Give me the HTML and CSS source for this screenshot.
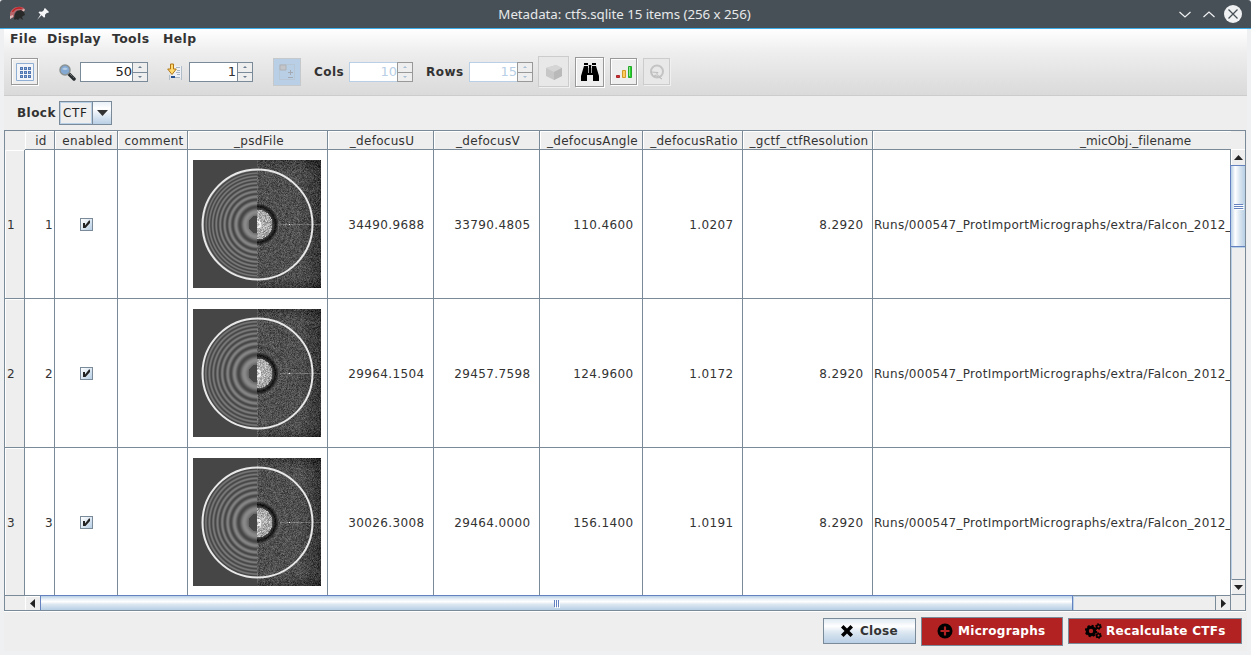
FILE: index.html
```html
<!DOCTYPE html>
<html lang="en">
<head>
<meta charset="utf-8">
<title>Metadata: ctfs.sqlite 15 items (256 x 256)</title>
<link rel="stylesheet" href="styles.css">
</head>
<body>
<header class="titlebar">
  <svg class="app-icon" width="18" height="18" viewBox="0 0 18 18"><path d="M1 14V9C2 3 9 0 15 3l1 2-3 2C9 4 5 6 5 12l-2 1z" fill="#b96468"/><path d="M3 7C4 3 10 1 14 3l-2 1C9 3 6 4 4 7z" fill="#c11f24"/><path d="M1 11l3-1v2l-3 2zM13 5l2-1 1 1-2 2z" fill="#d9b9ba"/><path d="M5 14l1-5 2-3 4-1 3 2 1 3-2 1-1 1 1 3-3-2-2 2-2-1-1 1z" fill="#292929"/></svg>
  <svg class="pin" width="12" height="12" viewBox="0 0 12 12"><path d="M7 1l1-1 4 4-1 1-1-.2-2 2 .1 2-1 1-2.600-2.600L0 12l3.500-5.500L1.500 4.500l1-1 2.500.2 2-1.700z" fill="#f5f6f7"/></svg>
  <h1 class="window-title">Metadata: ctfs.sqlite 15 items (256 x 256)</h1>
  <svg class="window-buttons" width="66" height="20" viewBox="0 0 66 20"><path d="M2.500 8l5.500 5 5.500-5M26.500 13l5.500-5 5.500 5" fill="none" stroke="#eff0f1" stroke-width="1.200"/><circle cx="56" cy="10" r="9" fill="#f0f1f2"/><path d="M51.500 5.500l9 9m0-9l-9 9" stroke="#475057" stroke-width="1.300"/></svg>
</header>
<main class="client">
  <section class="top">
    <nav class="menu"><span class="m-file">File</span><span class="m-display">Display</span><span class="m-tools">Tools</span><span class="m-help">Help</span></nav>
    <div class="toolbar">
      <button class="tool grid-tool"><svg width="18" height="18" viewBox="0 0 18 18"><path d="M.5.500h17v17H.5z" fill="#f2f4f7" stroke="#8faed4"/><path d="M4 4h3v3H4zm4 0h3v3H8zm4 0h3v3h-3zM4 8h3v3H4zm4 0h3v3H8zm4 0h3v3h-3zm-8 4h3v3H4zm4 0h3v3H8zm4 0h3v3h-3z" fill="#5077b2"/><path d="M5 5h1v1H5zm4 0h1v1H9zm4 0h1v1h-1zM5 9h1v1H5zm4 0h1v1H9zm4 0h1v1h-1zm-8 4h1v1H5zm4 0h1v1H9zm4 0h1v1h-1z" fill="#8fadd8"/></svg></button>
      <svg class="lens" width="17" height="17" viewBox="0 0 17 17"><path d="M10 10l5 5" stroke="#292e31" stroke-width="3.500" stroke-linecap="round"/><path d="M11 10l4 4" stroke="#9b9b9b" stroke-width="1" stroke-dasharray="1 1"/><circle cx="6" cy="6" r="5" fill="#83a9d3" stroke="#8c9292" stroke-width="1.500"/><path d="M3 5q3-3 6 0-3 2-6 0" fill="#b8cee4"/></svg>
      <div class="spinner zoom"><span>50</span><div class="steps"><i class="up"></i><i class="down"></i></div></div>
      <svg class="goto" width="16" height="18" viewBox="0 0 16 18"><path d="M2.500 12v5M14.500 3v14" stroke="#b1bdc9"/><path d="M4 3h10v12H4z" fill="#edf1f5"/><path d="M9 4.500h4M10 7.500h3M9 9.500h4M10 11.500h3M8 14.500h5" stroke="#a7b5c5"/><path d="M4 13h4v2H4z" fill="#244f91"/><path d="M3.500 1h3v5H9.300L5 11.500.7 6h2.800z" fill="#ffdb72" stroke="#b27517"/></svg>
      <div class="spinner page"><span>1</span><div class="steps"><i class="up"></i><i class="down"></i></div></div>
      <button class="tool adjust"><svg width="18" height="18" viewBox="0 0 18 18"><path d="M1.500 1.500h15v15h-15z" fill="none" stroke="#b9bec5" stroke-dasharray="1 1"/><path d="M2 2h6v5H2z" fill="#c4c5c8" stroke="#aeb2b8"/><path d="M10 9.500h5M12.500 7v5M10 14.500h5" stroke="#a4a9b2"/></svg></button>
      <label class="cols-label">Cols</label>
      <div class="spinner off"><span>10</span><div class="steps"><i class="up"></i><i class="down"></i></div></div>
      <label class="rows-label">Rows</label>
      <div class="spinner off"><span>15</span><div class="steps"><i class="up"></i><i class="down"></i></div></div>
      <button class="tool cube disabled"><svg width="18" height="18" viewBox="0 0 18 18"><path d="M1 5l10-3 6 3v8l-8 4-8-4z" fill="#c7c7c7"/><path d="M1 5l10-3 6 3-8 4z" fill="#d5d5d5"/><path d="M9 9l8-4v8l-8 4z" fill="#b9b9b9"/></svg></button>
      <button class="tool find"><svg width="18" height="18" viewBox="0 0 18 18"><path d="M3 0h4v2H3zm8 0h4v2h-4zM3 3h4v2h4V3h4l3 10v5h-6v-6H6v6H0v-5z" fill="#000"/><path d="M7.700 2h2.600v8H7.700z"/><path d="M7.500 3v7M10.500 3v7" stroke="#eee" stroke-width=".7"/></svg></button>
      <button class="tool chart"><svg width="18" height="16" viewBox="0 0 18 16"><path d="M1.500 11.500h3v2h-3z" fill="#d63232" stroke="#a8262b"/><path d="M7.500 6.500h3v7h-3z" fill="#ffce60" stroke="#d39a25"/><path d="M13.500 2.500h3v11h-3z" fill="#29d32e" stroke="#26a92b"/><path d="M14.500 3v9" stroke="#8ee891"/></svg></button>
      <button class="tool redo disabled"><svg width="16" height="16" viewBox="0 0 16 16"><circle cx="8" cy="7.500" r="6" fill="none" stroke="#c4c4c4" stroke-width="2"/><path d="M2 8l7 .5-1.500 1.500 5.500 5-7-4-1 2z" fill="#e5e5e5" stroke="#bdbdbd"/></svg></button>
    </div>
  </section>
  <div class="block-row"><label class="block-label">Block</label><div class="combo"><span>CTF</span><div class="combo-arrow"><svg width="11" height="6"><path d="M0 0h11L5.500 6z" fill="#333"/></svg></div></div></div>
  <section class="table-pane">
    <div class="table-main">
      <div class="row head" id="head"></div>
      <div class="body" id="body"></div>
      <div class="hscroll"><div class="corner"></div><div class="arrow"><svg width="5" height="9"><path d="M5 0v9L0 4.500z" fill="#222"/></svg></div><div class="hthumb"><i></i><i></i><i></i></div><div class="htrack"></div><div class="arrow right"><svg width="5" height="9"><path d="M0 0v9l5-4.500z" fill="#222"/></svg></div></div>
    </div>
    <div class="vscroll"><div class="vhead"></div><div class="varrow"><svg width="9" height="5"><path d="M0 5h9L4.500 0z" fill="#222"/></svg></div><div class="vthumb"><i></i><i></i><i></i></div><div class="vtrack"></div><div class="varrow bottom"><svg width="9" height="5"><path d="M0 0h9L4.500 5z" fill="#222"/></svg></div><div class="vcorner"></div></div>
  </section>
  <footer class="actions">
    <button class="action close"><svg width="12" height="12" viewBox="0 0 12 12"><path d="M2.500 0L6 3.500 9.500 0 12 2.500 8.500 6 12 9.500 9.500 12 6 8.500 2.500 12 0 9.500 3.500 6 0 2.500z"/></svg><span class="t-close">Close</span></button>
    <button class="action danger micro"><svg width="16" height="16" viewBox="0 0 16 16"><circle cx="8" cy="8" r="7.500"/><path d="M8 3.500v9M3.500 8h9" stroke="#b22222" stroke-width="2.200"/></svg><span class="t-micro">Micrographs</span></button>
    <button class="action danger recalc"><svg width="17" height="16" viewBox="0 0 17 16"><circle cx="6" cy="8" r="3.700" fill="none" stroke="#000" stroke-width="3"/><circle cx="6" cy="8" r="5.400" fill="none" stroke="#000" stroke-width="1.600" stroke-dasharray="2.200 2.040"/><g fill="none" stroke="#000"><circle cx="13.500" cy="3.500" r="1.800" stroke-width="1.600"/><circle cx="13.500" cy="3.500" r="2.900" stroke-dasharray="1.500 1.500"/><circle cx="13.500" cy="12.500" r="1.800" stroke-width="1.600"/><circle cx="13.500" cy="12.500" r="2.900" stroke-dasharray="1.500 1.500"/></g></svg><span class="t-recalc">Recalculate CTFs</span></button>
  </footer>
</main>
<script src="app.js"></script>
</body>
</html>
```
FILE: styles.css
```css
* { box-sizing: border-box; }
body { margin: 0; width: 1251px; height: 655px; overflow: hidden; background: #eff0f1; font: 12px/14px "DejaVu Sans", sans-serif; color: #333; }
button { font: inherit; color: inherit; margin: 0; padding: 0; }
svg { display: block; flex: none; }
span, label { white-space: nowrap; }
.titlebar { height: 29px; display: flex; align-items: center; background: #475057; border-bottom: 1px solid #3daee9; border-radius: 3px 3px 0 0; padding: 0 8px 0 9px; }
.pin { margin-left: 10px; }
.window-title { flex: 1; margin: 0 0 0 23px; text-align: center; font: 13.33px/20px "Noto Sans", sans-serif; color: #e6e8e9; letter-spacing: -0.05px; }
.client { margin: 0 4px; height: 622px; background: #eee; }
.top { height: 67px; background: linear-gradient(#fff, #eee 35%, #dadada); border-bottom: 1px solid #ccc; }
.menu { display: flex; height: 20px; padding: 3px 0 0 6px; font-weight: bold; letter-spacing: .4px; }
.menu span { flex: none; font-size: 12.4px; }
.m-file { width: 37px; } .m-display { width: 65px; } .m-tools { width: 51px; }
.toolbar { display: flex; align-items: center; height: 45px; padding: 0 0 0 7px; }
.toolbar > * { flex: none; }
.toolbar label, .block-row label { font-weight: bold; letter-spacing: .45px; }
.tool { width: 27px; height: 27px; display: flex; align-items: center; justify-content: center; border: 1px solid #999; background: #eee; box-shadow: 1px 1px #fff, inset 1px 1px #fff; }
.lens { margin: 1px 0 0 21px; }
.goto { margin: 0 0 0 19px; }
.spinner { display: flex; width: 64px; height: 20px; border: 1px solid #7a8a99; background: #fff; }
.spinner > span { flex: 1; text-align: right; font-size: 13px; line-height: 18px; padding-right: 1px; }
.spinner.zoom { width: 68px; margin-left: 4px; }
.spinner.zoom > span { color: #222; padding-right: 0; }
.spinner.page { margin-left: 6px; }
.steps { width: 15px; border-left: 1px solid #7a8a99; background: #eee; display: flex; flex-direction: column; }
.steps i { height: 9px; display: flex; align-items: center; justify-content: center; }
.steps i + i { border-top: 1px solid #7a8a99; }
.steps i::after { content: ""; border: 2px solid transparent; border-bottom-color: #6b7d8e; border-top: 0; }
.steps i.down::after { border-top: 2px solid #6b7d8e; border-bottom: 0; }
.spinner.off { border-color: #b8cfe5; color: #b8cfe5; margin-left: 6px; }
.spinner.off .steps { border: 1px solid #999; margin: -1px; width: 16px; height: 20px; }
.spinner.off i + i { border-color: #999; }
.spinner.off i::after { border-bottom-color: #a7bed5; }
.spinner.off i.down::after { border-top-color: #a7bed5; }
.adjust { width: 28px; height: 28px; background: #b8cfe5; border-color: #c5c9cc; box-shadow: none; margin-left: 20px; }
.cols-label { margin-left: 13px; width: 29px; }
.rows-label { margin-left: 13px; width: 37px; }
.cube { width: 31px; height: 31px; margin-left: 5px; }
.disabled { border-color: #ccc; background: #e8e8e8; box-shadow: 1px 1px #f0f0f0; }
.find { width: 29px; height: 30px; margin-left: 6px; }
.chart, .redo { margin-left: 6px; }
.block-row { height: 34px; display: flex; align-items: center; padding-left: 13px; }
.block-label { width: 42px; }
.combo { display: flex; width: 53px; height: 24px; border: 1px solid #7a8a99; background: #eee; }
.combo span { width: 32px; padding-left: 2px; letter-spacing: .6px; border: 1px solid #b8cfe5; line-height: 20px; color: #222; }
.combo-arrow { flex: 1; border-left: 1px solid #7a8a99; background: linear-gradient(#eaf1f8, #fff 30%, #b8cfe5); display: flex; align-items: center; justify-content: center; }
.table-pane { width: 1242px; height: 481px; border: 1px solid #7a8a99; display: flex; overflow: hidden; box-shadow: 0 1px #fff; }
.table-main { width: 1226px; display: flex; flex-direction: column; }
.row { display: grid; grid-template-columns: 20px 30px 63px 70px 140px 106px 106px 103px 100px 130px 358px; height: 149px; background: #fff; }
.row.head { height: 19px; background: #eee; }
.row.head > div { border-right: 1px solid #7a8a99; border-bottom: 1px solid #7a8a99; text-align: center; line-height: 20px; padding-left: 3px; box-shadow: inset 1px 1px #fff; white-space: nowrap; overflow: hidden; letter-spacing: .3px; }
.row.head > .blank { border-color: #eee; box-shadow: none; }
.row.head > .path-head { padding-left: 207px; text-align: left; border-right: 0; letter-spacing: .06px; }
.body { height: 446px; overflow: hidden; border-bottom: 1px solid #7a8a99; }
.body .row > div { border-right: 1px solid #7a8a99; border-bottom: 1px solid #7a8a99; display: flex; align-items: center; justify-content: flex-end; overflow: hidden; letter-spacing: .36px; padding: 2px 8.500px 0 0; }
.body .row > .number { background: #eee; box-shadow: inset 1px 1px #fff; justify-content: flex-start; padding: 2px 0 0 2px; }
.body .row > .id-cell { padding-right: 1px; }
.body .row > .check-cell, .body .row > .image-cell { justify-content: center; padding: 0; }
.body .row > .image-cell { justify-content: flex-start; padding-left: 5px; }
.body .row > .path-cell { justify-content: flex-start; padding: 2px 0 0 1px; letter-spacing: .3px; }
.check { width: 13px; height: 13px; border: 1px solid #7a8a99; background: linear-gradient(135deg, #fff, #b8cfe5); display: flex; align-items: center; justify-content: center; }
.hscroll { height: 14px; display: flex; background: #eee; }
.corner { width: 20px; }
.arrow { width: 15px; border-left: 1px solid #fff; border-top: 1px solid #fff; display: flex; align-items: center; justify-content: center; }
.arrow svg { margin-right: 2px; }
.arrow.right svg { margin-right: 0; }
.hthumb { width: 1033px; margin-top: -1px; height: 15px; border: 1px solid #6382bf; border-bottom: 0; background: linear-gradient(#b8cfe5, #e4edf5 20%, #fff 40%, #dce7f1 60%, #b8cfe5); display: flex; align-items: center; justify-content: center; gap: 1px; }
.hthumb i { width: 1px; height: 7px; background: #6382bf; box-shadow: 1px 1px #fff; }
.htrack { flex: 1; border-top: 1px solid #b8cfe5; border-left: 1px solid #b8cfe5; }
.arrow.right { width: 16px; border: 1px solid #7a8a99; border-width: 0 1px; }
.vscroll { width: 14px; background: #eee; display: flex; flex-direction: column; }
.vhead { height: 19px; border-bottom: 1px solid #fff; }
.varrow { height: 15px; display: flex; align-items: center; justify-content: center; border-left: 1px solid #fff; }
.varrow svg { margin-top: -1px; }
.varrow.bottom svg { margin-top: 1px; }
.vthumb { height: 82px; border: 1px solid #6382bf; border-right: 0; margin-left: -1px; background: linear-gradient(90deg, #b8cfe5, #fff 30%, #dce7f1 60%, #b8cfe5); display: flex; flex-direction: column; align-items: center; justify-content: center; gap: 1px; }
.vthumb i { width: 9px; height: 1px; background: #6382bf; box-shadow: 1px 1px #fff; }
.vtrack { flex: 1; border-left: 1px solid #b8cfe5; border-top: 1px solid #b8cfe5; }
.varrow.bottom { height: 16px; border-top: 1px solid #7a8a99; border-bottom: 1px solid #7a8a99; }
.vcorner { height: 15px; }
.actions { height: 40px; display: flex; justify-content: flex-end; align-items: center; gap: 5px; padding-right: 5px; }
.action { display: flex; align-items: center; height: 26px; border: 1px solid #7a8a99; font-weight: bold; letter-spacing: .3px; }
.close { width: 93px; padding-left: 17px; gap: 7px; background: linear-gradient(#dfe9f3, #fff 30%, #dce7f1 55%, #b8cfe5); }
.danger { background: #b22222; color: #fff; }
.micro { width: 142px; height: 29px; padding-left: 15px; gap: 5px; }
.recalc { width: 174px; padding-left: 16px; gap: 4px; }
```
FILE: app.js
```js
const columns = ["", "id", "enabled", "comment", "_psdFile", "_defocusU", "_defocusV", "_defocusAngle", "_defocusRatio", "_gctf_ctfResolution", "_micObj._filename"];
const records = [
  ["34490.9688", "33790.4805", "110.4600", "1.0207", "8.2920"],
  ["29964.1504", "29457.7598", "124.9600", "1.0172", "8.2920"],
  ["30026.3008", "29464.0000", "156.1400", "1.0191", "8.2920"]
];
const path = "Runs/000547_ProtImportMicrographs/extra/Falcon_2012_";
const tick = '<svg width="9" height="9" viewBox="0 0 9 9"><path d="M1 3h2v2.500L7 .500h1V3L3.500 8H1z" fill="#222"/></svg>';

document.getElementById("head").innerHTML = columns.map((name, i) =>
  `<div class="${i === 0 ? "blank" : i === 10 ? "path-head" : ""}"><span>${name}</span></div>`).join("");

document.getElementById("body").innerHTML = records.map((values, i) =>
  `<div class="row"><div class="number">${i + 1}</div><div class="id-cell">${i + 1}</div><div class="check-cell"><div class="check">${tick}</div></div><div></div><div class="image-cell"><canvas width="128" height="128"></canvas></div>` +
  values.map(v => `<div><span>${v}</span></div>`).join("") + `<div class="path-cell"><span>${path}</span></div></div>`).join("");

// Power spectrum: fitted Thon rings on the left half, measured spectrum on the right.
function drawSpectrum(canvas, defocus, seed) {
  const ctx = canvas.getContext("2d");
  const image = ctx.createImageData(128, 128);
  const period = 17.6 * Math.sqrt(34490 / defocus);
  let state = seed;
  const random = () => (state = (state * 1664525 + 1013904223) >>> 0) / 4294967296;
  for (let y = 0; y < 128; y++) {
    for (let x = 0; x < 128; x++) {
      const dx = x - 64, dy = y - 64, r = Math.hypot(dx, dy);
      const ring = Math.sin(Math.PI * r * r / (period * period)) ** 2;
      const noise = random() + random() + random() - 1.5;
      let v;
      if (x < 64) {
        v = r < 9 || r > 55 ? 70 : 70 + (74 - r * 0.5) * ring;
      } else {
        const edge = Math.max(0, dx - 42) * 1.3 + Math.max(0, Math.abs(dy) - 52) * 1.6;
        v = 80 - edge + noise * 28;
        if (r < 15) v = 190 + noise * 48 - r * 2;
        else if (r < 21) v = 18 + Math.abs(r - 18) * 18 + noise * 14;
        else if (r < 45) v += (ring - 0.5) * 28 * (1 - r / 50);
        if (r < 4 && r > 2) v = 240;
        if (dy === 0 && dx > 22) v += 38;
        if (dy === 0 && dx === 32) v = 245;
        if (dx === 0 && r > 20) v += 20;
      }
      const p = (y * 128 + x) * 4;
      image.data[p] = image.data[p + 1] = image.data[p + 2] = v;
      image.data[p + 3] = 255;
    }
  }
  ctx.putImageData(image, 0, 0);
  ctx.strokeStyle = "#e8e8e8";
  ctx.lineWidth = 2;
  ctx.beginPath();
  ctx.arc(64.5, 64.5, 55, 0, Math.PI * 2);
  ctx.stroke();
}
document.querySelectorAll("canvas").forEach((c, i) => drawSpectrum(c, Number(records[i][0]), 71 + i * 997));
```
